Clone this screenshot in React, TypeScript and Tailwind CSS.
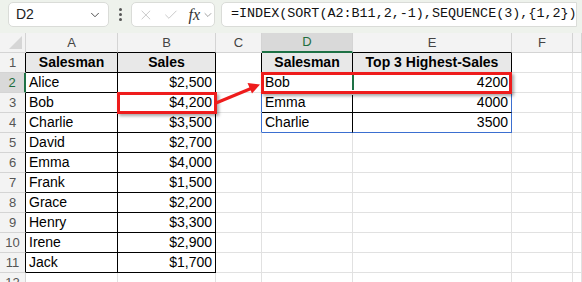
import { ChevronDown, X, Check } from "lucide-react";

const cols = ["A", "B", "C", "D", "E", "F", ""];
const colW = ["26px", "92px", "98px", "46px", "91px", "159px", "61px", "1fr"];

const left: [string, string][] = [
  ["Alice", "$2,500"],
  ["Bob", "$4,200"],
  ["Charlie", "$3,500"],
  ["David", "$2,700"],
  ["Emma", "$4,000"],
  ["Frank", "$1,500"],
  ["Grace", "$2,200"],
  ["Henry", "$3,300"],
  ["Irene", "$2,900"],
  ["Jack", "$1,700"],
];

const right: [string, string][] = [
  ["Bob", "4200"],
  ["Emma", "4000"],
  ["Charlie", "3500"],
];

const BLACK = "border-r-black";
const BLUE = "border-r-[#3b6fd0]";

function rightBorder(r: number, c: number) {
  if (r >= 1 && r <= 11 && c <= 2) return BLACK;
  if (r === 1 && c >= 3 && c <= 5) return BLACK;
  if (r >= 2 && r <= 4) {
    if (c === 3 || c === 5) return BLUE;
    if (c === 4) return BLACK;
  }
  return "border-r-[#e1e1e1]";
}

function bottomBorder(r: number, c: number) {
  if ((c === 1 || c === 2) && r <= 11) return "border-b-black";
  if ((c === 4 || c === 5) && r >= 1 && r <= 3) return "border-b-black";
  if ((c === 4 || c === 5) && r === 4) return "border-b-[#3b6fd0]";
  return "border-b-[#e1e1e1]";
}

function cellText(r: number, c: number): { text: string; bold?: boolean; align?: string } {
  if (r === 1) {
    if (c === 1 || c === 4) return { text: "Salesman", bold: true, align: "center" };
    if (c === 2) return { text: "Sales", bold: true, align: "center" };
    if (c === 5) return { text: "Top 3 Highest-Sales", bold: true, align: "center" };
  }
  if (r >= 2 && r <= 11) {
    const row = left[r - 2];
    if (c === 1) return { text: row[0] };
    if (c === 2) return { text: row[1], align: "right" };
  }
  if (r >= 2 && r <= 4) {
    const row = right[r - 2];
    if (c === 4) return { text: row[0] };
    if (c === 5) return { text: row[1], align: "right" };
  }
  return { text: "" };
}

function Grid() {
  const rows = Array.from({ length: 13 }, (_, i) => i);
  return (
    <div
      className="grid auto-rows-[20px]"
      style={{ gridTemplateColumns: colW.join(" ") }}
    >
      {rows.map((r) =>
        colW.map((_, c) => {
          // column letters
          if (r === 0) {
            if (c === 0)
              return (
                <div key={`${r}-${c}`} className="relative bg-[#f3f3f3] border-r border-b border-r-[#d4d4d4] border-b-[#d4d4d4]">
                  <div className="absolute right-[3px] bottom-[3px] w-0 h-0 border-l-[13px] border-l-transparent border-b-[13px] border-b-[#d6d6d6]" />
                </div>
              );
            const sel = c === 4;
            return (
              <div
                key={`${r}-${c}`}
                className={`flex items-center justify-center text-[13px] border-r border-r-[#d4d4d4] ${
                  sel
                    ? "bg-[#d9d9d9] text-[#1e6e3f] border-b-2 border-b-[#1e7145]"
                    : `bg-[#f3f3f3] text-[#444] border-b ${
                        c === 1 || c === 2 || c === 5 ? "border-b-black" : "border-b-[#d4d4d4]"
                      }`
                }`}
              >
                {cols[c - 1]}
              </div>
            );
          }
          // row numbers
          if (c === 0) {
            const sel = r === 2;
            const edge = r >= 1 && r <= 11 ? "border-r-black" : "border-r-[#d4d4d4]";
            return (
              <div
                key={`${r}-${c}`}
                className={`flex items-center justify-center text-[13px] border-b border-b-[#d4d4d4] ${
                  sel
                    ? "bg-[#d9d9d9] text-[#1e6e3f] border-r-2 border-r-[#1e7145]"
                    : `bg-[#f3f3f3] text-[#555] border-r ${edge}`
                }`}
              >
                {r}
              </div>
            );
          }
          const t = cellText(r, c);
          const hdr = r === 1 && (c === 1 || c === 2 || c === 4 || c === 5);
          return (
            <div
              key={`${r}-${c}`}
              className={`flex items-center px-[3px] text-[14px] text-black whitespace-nowrap overflow-hidden border-r border-b ${rightBorder(
                r,
                c
              )} ${bottomBorder(r, c)} ${hdr ? "bg-[#e8e8e8]" : "bg-white"} ${t.bold ? "font-bold" : ""} ${
                t.align === "center" ? "justify-center" : t.align === "right" ? "justify-end" : "justify-start"
              }`}
            >
              {t.text}
            </div>
          );
        })
      )}
    </div>
  );
}

export default function App() {
  return (
    <div className="relative w-[582px] h-[282px] overflow-hidden bg-white font-['Liberation_Sans',Arial,sans-serif]">
      {/* formula bar */}
      <div className="flex items-start h-[33px] bg-[#eef2ec] pt-[2px] pl-[8px]">
        <div className="flex items-center justify-between w-[101px] h-[25px] bg-white border border-[#dadcd8] rounded-[5px] pl-[7px] pr-[6px]">
          <span className="text-[14px] text-[#222]">D2</span>
          <ChevronDown size={14} strokeWidth={1.6} className="text-[#444]" />
        </div>
        <div className="flex flex-col items-center justify-center gap-[2px] w-[22px] h-[25px]">
          <span className="w-[3px] h-[3px] rounded-full bg-[#555]" />
          <span className="w-[3px] h-[3px] rounded-full bg-[#555]" />
          <span className="w-[3px] h-[3px] rounded-full bg-[#555]" />
        </div>
        <div className="flex items-center w-[84px] h-[25px] bg-white border border-[#dadcd8] rounded-[5px] pl-[6px]">
          <X size={16} strokeWidth={1.1} className="text-[#b5b5b5]" />
          <Check size={16} strokeWidth={1.1} className="text-[#b5b5b5] ml-[9px]" />
          <span className="ml-[10px] text-[16px] italic text-[#333] font-['Liberation_Serif',serif] leading-none">fx</span>
          <ChevronDown size={12} strokeWidth={1.4} className="text-[#777] ml-[2px]" />
        </div>
        <div className="flex items-center ml-[6px] w-[356px] h-[25px] bg-white border border-[#dadcd8] rounded-l-[5px] pl-[9px] overflow-hidden">
          <span className="text-[13.4px] tracking-[0] text-[#111] font-['Liberation_Mono'] whitespace-nowrap">
            =INDEX(SORT(A2:B11,2,-1),SEQUENCE(3),{"{"}1,2{"}"})
          </span>
        </div>
      </div>

      <Grid />

      {/* active cell D2 */}
      <div className="absolute left-[261px] top-[72px] w-[93px] h-[22px] border-2 border-[#1e7145]" />
      <div className="absolute left-[351px] top-[90px] w-[5px] h-[5px] bg-[#1e7145] border border-white" />

      {/* highlights */}
      <div className="absolute left-[117px] top-[92px] w-[100px] h-[22px] border-[3px] border-[#ee1c1c] shadow-[2px_2px_3px_rgba(0,0,0,0.35)]" />
      <div className="absolute left-[261px] top-[72px] w-[251px] h-[22px] border-[3px] border-[#ee1c1c] shadow-[2px_2px_3px_rgba(0,0,0,0.35)]" />
      <svg className="absolute left-0 top-0" width="582" height="282" viewBox="0 0 582 282">
        <line x1="216" y1="103" x2="251" y2="88.5" stroke="#ee1c1c" strokeWidth="3" />
        <polygon points="260,84.5 252,93.5 247.5,83" fill="#ee1c1c" />
      </svg>
    </div>
  );
}
